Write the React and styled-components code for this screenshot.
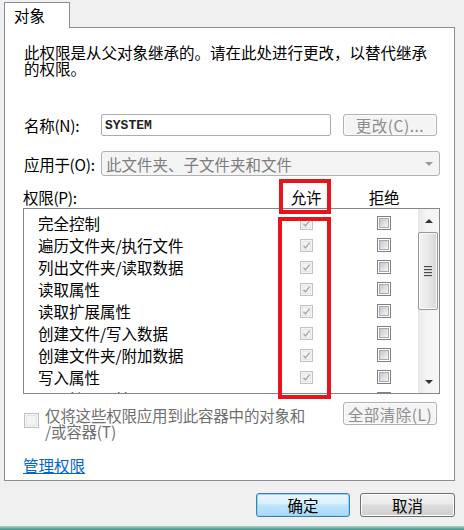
import React from 'react';
import styled, { createGlobalStyle } from 'styled-components';

const GlobalStyle = createGlobalStyle`
  html, body {
    margin: 0;
    padding: 0;
    background: #f0f0f0;
  }
  body {
    font-family: "Noto Sans CJK SC", "Liberation Sans", sans-serif;
    font-size: 15.5px;
    color: #000;
  }
`;

const Window = styled.div`
  position: relative;
  width: 464px;
  height: 530px;
  display: flex;
  flex-direction: column;
  background: #f0f0f0;
  overflow: hidden;
`;

const TabStrip = styled.div`
  display: flex;
  height: 27px;
  padding-left: 4px;
`;

const Tab = styled.div`
  margin-top: 2px;
  width: 66px;
  height: 26px;
  padding-left: 9px;
  box-sizing: border-box;
  border: 1px solid #898c95;
  border-bottom: none;
  background: #fff;
  line-height: 24px;
  position: relative;
  z-index: 1;
`;

const Panel = styled.div`
  margin: 0 9px 0 4px;
  height: 454px;
  box-sizing: border-box;
  border: 1px solid #898c95;
  background: #fff;
  padding: 16px 14px 0 19px;
  display: flex;
  flex-direction: column;
`;

const Intro = styled.div`
  line-height: 16px;
  white-space: nowrap;
`;

const FieldRow = styled.div`
  display: flex;
  align-items: center;
  margin-top: ${p => p.$top}px;
  height: ${p => p.$h}px;
  padding-right: ${p => p.$pr || 0}px;
`;

const Label = styled.div`
  width: 77px;
  flex: none;
  white-space: nowrap;
  letter-spacing: -0.3px;
`;

const TextInput = styled.div`
  flex: 1;
  height: 100%;
  box-sizing: border-box;
  border: 1px solid #abadb3;
  border-radius: 2px;
  padding-left: 3px;
  display: flex;
  align-items: center;
  font-family: "Liberation Mono", monospace;
  font-size: 13px;
  font-weight: bold;
  color: #222;
`;

const Button = styled.div`
  flex: none;
  width: ${p => p.$w || 94}px;
  height: ${p => p.$h || 23}px;
  margin-left: ${p => p.$ml || 0}px;
  margin-right: ${p => p.$mr || 0}px;
  box-sizing: border-box;
  border: 1px solid ${p => (p.$primary ? '#3c7fb1' : p.$disabled ? '#adb2b5' : '#707070')};
  border-radius: 3px;
  background: ${p =>
    p.$primary
      ? 'linear-gradient(#eaf6fd 0%, #d9f0fc 45%, #bee6fd 50%, #a7d9f5 100%)'
      : p.$disabled
      ? '#f4f4f4'
      : 'linear-gradient(#f2f2f2 0%, #ebebeb 45%, #dddddd 50%, #cfcfcf 100%)'};
  box-shadow: ${p => (p.$primary ? 'inset 0 0 0 1px #94d4f5' : 'inset 0 0 0 1px #fcfcfc')};
  color: ${p => (p.$disabled ? '#8d8d8d' : '#000')};
  display: flex;
  align-items: center;
  justify-content: center;
  white-space: nowrap;
  letter-spacing: ${p => (p.$disabled ? '0.5px' : '0')};
`;

const Select = styled.div`
  flex: 1;
  height: 100%;
  box-sizing: border-box;
  border: 1px solid #adb2b5;
  border-radius: 3px;
  background: #f4f4f4;
  color: #7d7d7d;
  display: flex;
  align-items: center;
  padding-left: 4px;
  white-space: nowrap;
`;

const SelectArrow = styled.div`
  margin-left: auto;
  margin-right: 6px;
  width: 0;
  height: 0;
  border-left: 4px solid transparent;
  border-right: 4px solid transparent;
  border-top: 4px solid #9a9a9a;
`;

const ColumnsHeader = styled.div`
  margin-top: 9px;
  margin-left: -1px;
  height: 23px;
  display: grid;
  grid-template-columns: 1fr 50px 50px;
  column-gap: 28px;
  padding-right: 31px;
  align-items: center;
`;

const HeadCell = styled.span`
  white-space: nowrap;
  text-align: ${p => (p.$center ? 'center' : 'left')};
  letter-spacing: -0.3px;
`;

const ListBox = styled.div`
  margin-left: -1px;
  height: 186px;
  box-sizing: border-box;
  border: 1px solid #828790;
  display: flex;
  overflow: hidden;
`;

const Rows = styled.div`
  flex: 1;
  padding-top: 3px;
  overflow: hidden;
`;

const Row = styled.div`
  height: 22px;
  display: grid;
  grid-template-columns: 1fr 50px 50px;
  column-gap: 28px;
  padding: 0 9px 0 14px;
  align-items: center;
  white-space: nowrap;
`;

const CheckCell = styled.div`
  display: flex;
  justify-content: center;
`;

const Box = styled.div`
  position: relative;
  width: ${p => p.$size || 13}px;
  height: ${p => p.$size || 13}px;
  box-sizing: border-box;
  border: 1px solid ${p => (p.$disabled ? '#c2c2c2' : '#7f8080')};
  background: ${p => (p.$disabled ? '#f4f4f4' : '#fff')};
  flex: none;
  &::after {
    content: '';
    position: absolute;
    inset: 1px;
    box-sizing: border-box;
    border: 1px solid ${p => (p.$disabled ? '#e6e6e6' : '#a6abb1')};
    background: ${p =>
      p.$disabled ? 'transparent' : 'linear-gradient(135deg, #c4c8ce, #f4f4f4)'};
  }
  svg {
    position: absolute;
    left: 1px;
    top: 1px;
    z-index: 1;
  }
`;

const CheckBox = ({ checked, disabled, size }) => (
  <Box $disabled={disabled} $size={size}>
    {checked && (
      <svg width="9" height="9" viewBox="0 0 9 9">
        <path d="M1.5 4.8 L3.5 7 L7.6 1.6" fill="none" stroke="#a8a8a8" strokeWidth="1.4" />
      </svg>
    )}
  </Box>
);

const ScrollBar = styled.div`
  width: 21px;
  flex: none;
  display: flex;
  flex-direction: column;
  background: linear-gradient(to right, #e8e8e8, #f4f4f4 40%, #f6f6f6);
`;

const ArrowButton = styled.div`
  height: ${p => p.$h}px;
  flex: none;
  display: flex;
  align-items: center;
  justify-content: center;
  &::before {
    content: '';
    width: 0;
    height: 0;
    border-left: 4px solid transparent;
    border-right: 4px solid transparent;
    ${p => (p.$down ? 'border-top: 4px solid #333;' : 'border-bottom: 4px solid #333;')}
  }
`;

const Thumb = styled.div`
  margin: 0 1px 0 0;
  height: 78px;
  box-sizing: border-box;
  border: 1px solid #979797;
  border-radius: 2px;
  background: linear-gradient(to right, #f3f3f3, #e8e8e8 50%, #d6d6d6);
  box-shadow: inset 0 0 0 1px #fbfbfb;
  display: flex;
  flex-direction: column;
  align-items: center;
  justify-content: center;
  gap: 2px;
`;

const Grip = styled.div`
  width: 8px;
  height: 1px;
  background: #4a4a4a;
  box-shadow: 0 1px 0 #cfcfcf;
`;

const Track = styled.div`
  flex: 1;
`;

const BottomRow = styled.div`
  margin-top: 8px;
  display: flex;
  align-items: flex-start;
`;

const InheritOption = styled.div`
  flex: 1;
  display: flex;
  align-items: flex-start;
  gap: 6px;
  margin-top: 5px;
  color: #6f6f6f;
  line-height: 16px;
  letter-spacing: -0.2px;
  & > :first-child {
    margin-top: 6px;
  }
`;

const Link = styled.a`
  margin-top: 18px;
  margin-left: -1px;
  align-self: flex-start;
  color: #0066cc;
  text-decoration: underline;
  line-height: 16px;
  cursor: pointer;
`;

const Footer = styled.div`
  display: flex;
  justify-content: flex-end;
  gap: 10px;
  padding: 12px 9px 0 0;
`;

const Strip = styled.div`
  margin-top: auto;
  height: 4px;
  background: linear-gradient(#a9d3c8, #3f8f86);
`;

const RedMark = styled.div`
  position: absolute;
  box-sizing: border-box;
  border: 4px solid #e8141c;
  left: ${p => p.$x}px;
  top: ${p => p.$y}px;
  width: ${p => p.$w}px;
  height: ${p => p.$h}px;
  pointer-events: none;
`;

const permissions = [
  '完全控制',
  '遍历文件夹/执行文件',
  '列出文件夹/读取数据',
  '读取属性',
  '读取扩展属性',
  '创建文件/写入数据',
  '创建文件夹/附加数据',
  '写入属性',
  '写入扩展属性',
];

export default function App() {
  return (
    <Window>
      <GlobalStyle />
      <TabStrip>
        <Tab>对象</Tab>
      </TabStrip>
      <Panel>
        <Intro>
          此权限是从父对象继承的。请在此处进行更改，以替代继承
          <br />
          的权限。
        </Intro>
        <FieldRow $top={38} $h={22} $pr={3}>
          <Label>名称(N):</Label>
          <TextInput>SYSTEM</TextInput>
          <Button $disabled $ml={12} $h={22}>更改(C)...</Button>
        </FieldRow>
        <FieldRow $top={15} $h={25}>
          <Label>应用于(O):</Label>
          <Select>
            此文件夹、子文件夹和文件
            <SelectArrow />
          </Select>
        </FieldRow>
        <ColumnsHeader>
          <HeadCell>权限(P):</HeadCell>
          <HeadCell $center>允许</HeadCell>
          <HeadCell $center>拒绝</HeadCell>
        </ColumnsHeader>
        <ListBox>
          <Rows>
            {permissions.map(name => (
              <Row key={name}>
                <span>{name}</span>
                <CheckCell>
                  <CheckBox checked disabled />
                </CheckCell>
                <CheckCell>
                  <CheckBox size={14} />
                </CheckCell>
              </Row>
            ))}
          </Rows>
          <ScrollBar>
            <ArrowButton $h={23} />
            <Thumb>
              <Grip />
              <Grip />
              <Grip />
              <Grip />
            </Thumb>
            <Track />
            <ArrowButton $h={22} $down />
          </ScrollBar>
        </ListBox>
        <BottomRow>
          <InheritOption>
            <CheckBox disabled size={15} />
            <div>
              仅将这些权限应用到此容器中的对象和
              <br />
              /或容器(T)
            </div>
          </InheritOption>
          <Button $disabled $w={94} $h={23} $mr={3}>全部清除(L)</Button>
        </BottomRow>
        <Link>管理权限</Link>
      </Panel>
      <Footer>
        <Button $primary $w={94} $h={24}>确定</Button>
        <Button $w={95} $h={24}>取消</Button>
      </Footer>
      <Strip />
      <RedMark $x={279} $y={179} $w={52} $h={35} />
      <RedMark $x={278} $y={217} $w={53} $h={182} />
    </Window>
  );
}
